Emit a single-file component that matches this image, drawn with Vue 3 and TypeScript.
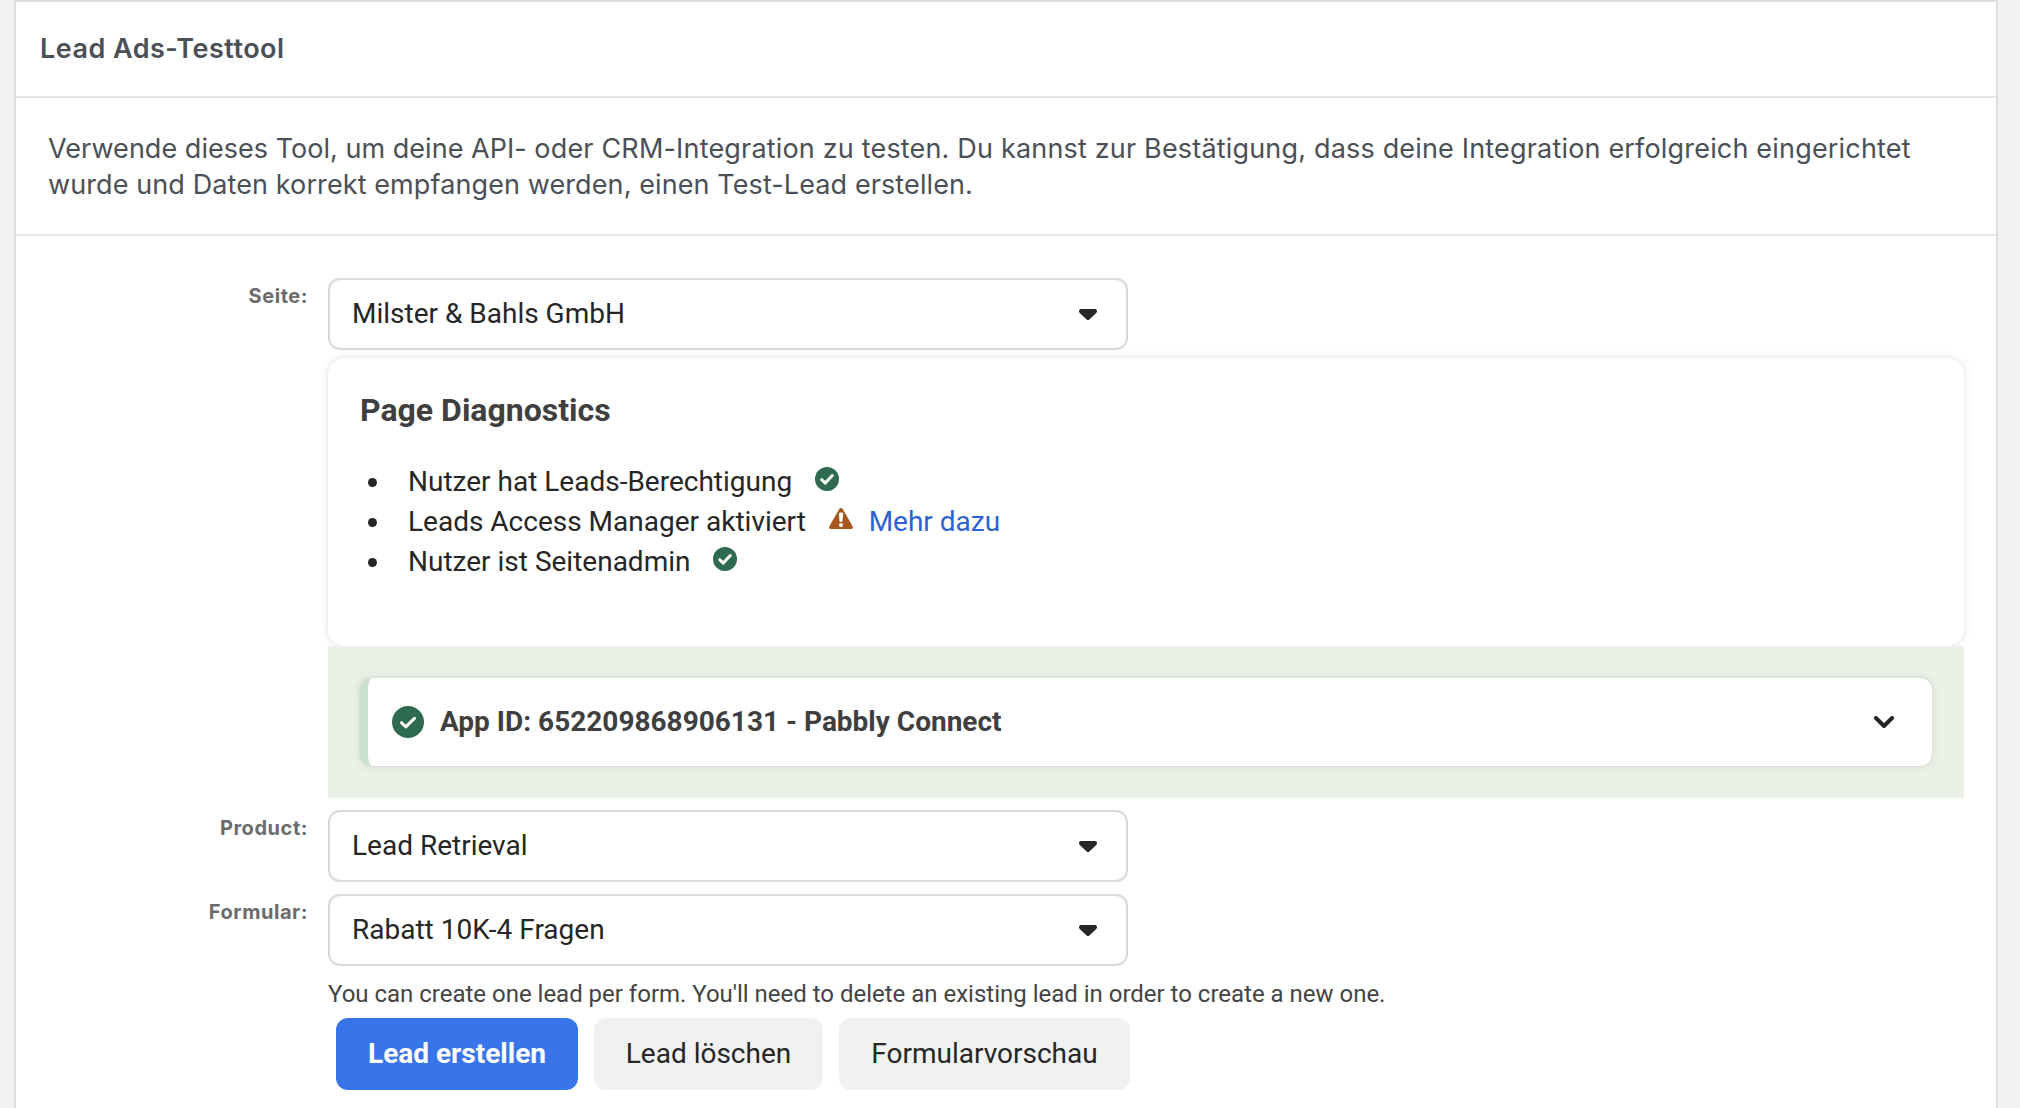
<script setup lang="ts">
interface Diagnostic {
  text: string
  ok: boolean
  link?: string
}

const diagnostics: Diagnostic[] = [
  { text: 'Nutzer hat Leads-Berechtigung', ok: true },
  { text: 'Leads Access Manager aktiviert', ok: false, link: 'Mehr dazu' },
  { text: 'Nutzer ist Seitenadmin', ok: true },
]
</script>

<template>
  <main class="panel">
    <header class="head"><h1>Lead Ads-Testtool</h1></header>
    <p class="intro">
      <span class="l1"><span class="lead">Verwende dieses Tool, um deine API- </span>oder CRM-Integration zu testen. Du kannst zur Bestätigung, dass deine Integration erfolgreich eingerichtet</span>
      <span class="l2">wurde und Daten korrekt empfangen werden, einen Test-Lead erstellen.</span>
    </p>

    <div class="form">
      <div class="row">
        <label class="label">Seite:</label>
        <div class="field">
          <div class="select">
            <span>Milster &amp; Bahls GmbH</span>
            <svg class="caret" width="18" height="12" viewBox="0 0 18 12"><path d="M2 0H16Q18 0 18 2Q18 3.3 17.2 4.1L10.4 10.4Q9 11.7 7.6 10.4L.8 4.1Q0 3.3 0 2Q0 0 2 0Z" fill="#262626" /></svg>
          </div>
          <section class="diag">
            <h2>Page Diagnostics</h2>
            <ul>
              <li v-for="d in diagnostics" :key="d.text">
                <i class="dot"></i>
                <span>{{ d.text }}</span>
                <svg v-if="d.ok" class="state" width="24" height="24" viewBox="0 0 24 24"><circle cx="12" cy="12" r="12" fill="#2d6a4f" /><path d="M6.7 12.7L10.3 16.1L17.3 8.6" fill="none" stroke="#fff" stroke-width="3" stroke-linecap="round" stroke-linejoin="round" /></svg>
                <svg v-else class="state" width="24" height="24" viewBox="0 0 24 24"><path d="M10.1 2.2Q12 -.4 13.9 2.2L23.6 19.2Q24.6 21.8 22.3 22H1.7Q-.6 21.8.4 19.2Z" fill="#a6561e" /><path d="M9.8 6.7Q9.8 5.6 12 5.6Q14.2 5.6 14.2 6.7L13.4 14.8H10.6Z" fill="#fff" /><circle cx="12" cy="18.1" r="2" fill="#fff" /></svg>
                <a v-if="d.link">{{ d.link }}</a>
              </li>
            </ul>
          </section>
          <section class="apps">
            <div class="app">
              <svg width="32" height="32" viewBox="0 0 32 32"><circle cx="16" cy="16" r="16" fill="#2d6a4f" /><path d="M9.5 16.7L13.7 20.8L22.5 12.3" fill="none" stroke="#fff" stroke-width="3" stroke-linecap="round" stroke-linejoin="round" /></svg>
              <strong>App ID: 652209868906131 - Pabbly Connect</strong>
              <svg class="chev" width="20" height="12" viewBox="0 0 20 12"><path d="M2 2L10 10L18 2" fill="none" stroke="#262626" stroke-width="4" stroke-linecap="round" stroke-linejoin="round" /></svg>
            </div>
          </section>
        </div>
      </div>

      <div class="row">
        <label class="label">Product:</label>
        <div class="field">
          <div class="select">
            <span>Lead Retrieval</span>
            <svg class="caret" width="18" height="12" viewBox="0 0 18 12"><path d="M2 0H16Q18 0 18 2Q18 3.3 17.2 4.1L10.4 10.4Q9 11.7 7.6 10.4L.8 4.1Q0 3.3 0 2Q0 0 2 0Z" fill="#262626" /></svg>
          </div>
        </div>
      </div>

      <div class="row">
        <label class="label">Formular:</label>
        <div class="field">
          <div class="select">
            <span>Rabatt 10K-4 Fragen</span>
            <svg class="caret" width="18" height="12" viewBox="0 0 18 12"><path d="M2 0H16Q18 0 18 2Q18 3.3 17.2 4.1L10.4 10.4Q9 11.7 7.6 10.4L.8 4.1Q0 3.3 0 2Q0 0 2 0Z" fill="#262626" /></svg>
          </div>
          <p class="help">You can create one lead per form. You'll need to delete an existing lead in order to create a new one.</p>
          <div class="actions">
            <button class="primary">Lead erstellen</button>
            <button class="b2">Lead löschen</button>
            <button class="b3">Formularvorschau</button>
          </div>
        </div>
      </div>
    </div>
  </main>
</template>

<style>
body {
  background: #f1f1f1;
  overflow: hidden;
}
</style>

<style scoped>
.panel {
  box-sizing: border-box;
  width: 1984px;
  height: 1108px;
  margin-left: 14px;
  overflow: hidden;
  background: #fff;
  border: 2px solid #dddde3;
  border-bottom: 0;
  font-family: Roboto, "Liberation Sans", sans-serif;
  color: #262626;
}
.head {
  height: 94px;
  border-bottom: 2px solid #e4e4e6;
  display: flex;
  align-items: center;
  padding-left: 24px;
}
h1 {
  margin: 0;
  font: 600 27px/32px Inter, sans-serif;
  color: #4b4f56;
  letter-spacing: 0.47px;
}
.intro {
  margin: 0;
  height: 134px;
  border-bottom: 2px solid #e4e4e6;
  padding: 2px 0 0 32px;
  font: 400 27px/36px Inter, sans-serif;
  color: #4b4f56;
  white-space: nowrap;
  display: flex;
  flex-direction: column;
  justify-content: center;
}
.l1 {
  letter-spacing: 0.178px;
}
.lead {
  letter-spacing: 0.03px;
}
.l2 {
  letter-spacing: 0.1px;
}
.form {
  padding-top: 42px;
  display: flex;
  flex-direction: column;
  gap: 12px;
}
.row {
  display: flex;
}
.label {
  width: 292px;
  margin-right: 20px;
  padding-top: 6px;
  text-align: right;
  font: 700 20px/24px Inter, sans-serif;
  letter-spacing: 0.55px;
  color: #6b6b6b;
}
.field {
  width: 1636px;
}
.select {
  box-sizing: border-box;
  width: 800px;
  height: 72px;
  border: 2px solid #d9d9d9;
  border-radius: 12px;
  padding: 0 29px 0 22px;
  display: flex;
  align-items: center;
  justify-content: space-between;
  font-size: 28px;
}
.select span {
  padding-bottom: 2px;
}
.caret {
  margin-top: 2px;
}
.diag {
  height: 288px;
  box-sizing: border-box;
  margin-top: 8px;
  padding: 32px;
  border-radius: 16px;
  box-shadow: 0 0 10px rgba(0, 0, 0, 0.1), 0 0 2px rgba(0, 0, 0, 0.1);
}
h2 {
  margin: 0;
  font-size: 32px;
  line-height: 40px;
  font-weight: 700;
  color: #3f3f3f;
}
ul {
  list-style: none;
  margin: 32px 0 0;
  padding: 0;
}
li {
  height: 40px;
  display: flex;
  align-items: center;
  font-size: 28px;
  line-height: 40px;
}
.dot {
  width: 9px;
  height: 9px;
  border-radius: 50%;
  background: #262626;
  margin: 1px 31px 0 8px;
}
.state {
  margin: -6px 0 0 22.7px;
}
a {
  margin-left: 16px;
  color: #2d63d0;
}
.apps {
  position: relative;
  background: #ebf1e7;
  padding: 32px;
}
.app {
  box-sizing: border-box;
  height: 88px;
  background: #fff;
  border-left: 8px solid #c8e1cc;
  border-radius: 12px;
  box-shadow: 0 0 10px rgba(0, 0, 0, 0.1), 0 0 2px rgba(0, 0, 0, 0.1);
  display: flex;
  align-items: center;
  padding: 0 38px 0 24px;
}
.app strong {
  margin-left: 16px;
  padding-bottom: 2px;
  font-size: 28px;
  font-weight: 700;
  color: #3f3f3f;
}
.chev {
  margin-left: auto;
}
.help {
  margin: 12px 0 0;
  font-size: 24px;
  line-height: 32px;
  letter-spacing: -0.01px;
  color: #444;
}
.actions {
  display: flex;
  gap: 16px;
  margin: 8px 0 0 8px;
}
button {
  height: 72px;
  border: 0;
  border-radius: 12px;
  padding: 0;
  background: #f1f1f1;
  color: #262626;
  font: 400 28px/36px Roboto, sans-serif;
}
.primary {
  width: 242px;
  background: #3975ea;
  color: #fff;
  font-weight: 700;
}
.b2 {
  width: 229px;
}
.b3 {
  width: 291px;
}
</style>
